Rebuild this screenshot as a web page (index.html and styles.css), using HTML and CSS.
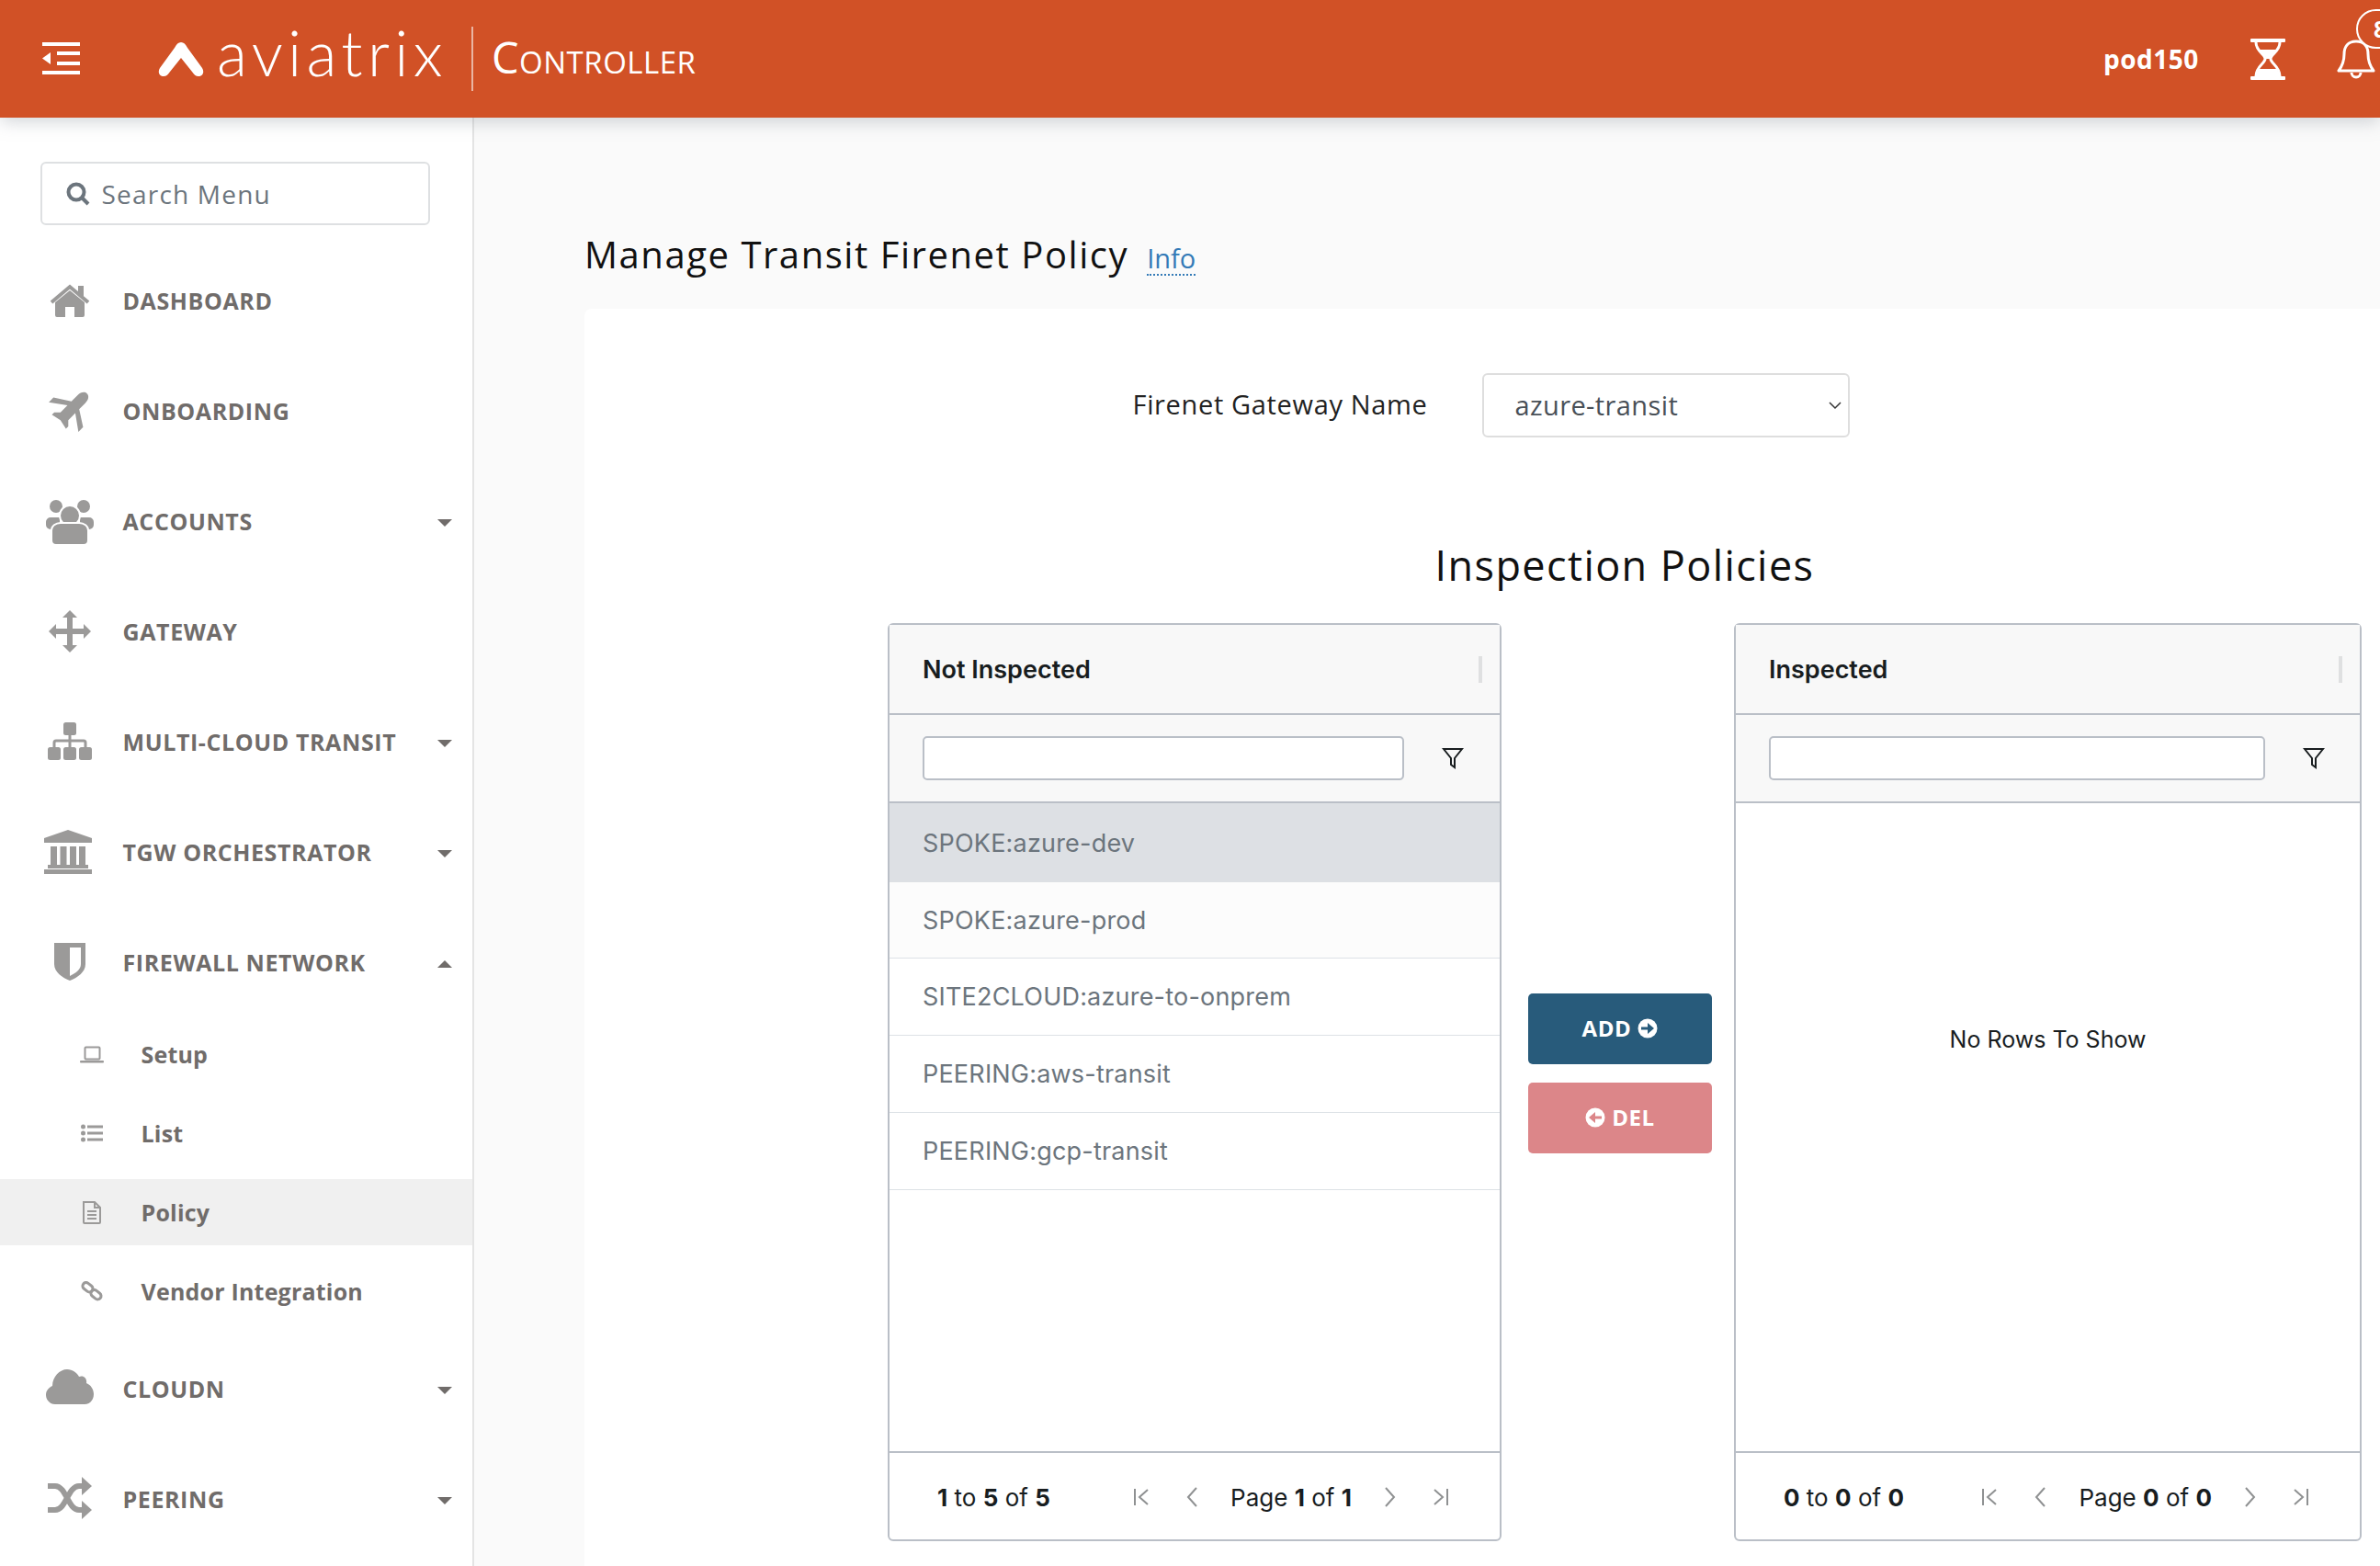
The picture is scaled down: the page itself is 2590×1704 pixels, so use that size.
FILE: index.html
```html
<!DOCTYPE html>
<html>

<head>
    <meta charset="UTF-8">
    <link rel="stylesheet" href="styles.css">
    <title>Aviatrix Controller - Manage Transit Firenet Policy</title>
</head>

<body>
    <svg class="defs" width="0" height="0">
        <symbol id="pg-first" viewBox="0 0 24 24"><path d="M5 3v18M19 4l-9 8 9 8" /></symbol>
        <symbol id="pg-prev" viewBox="0 0 24 24"><path d="M16 2L7 12l9 10" /></symbol>
        <symbol id="pg-next" viewBox="0 0 24 24"><path d="M8 2l9 10-9 10" /></symbol>
        <symbol id="pg-last" viewBox="0 0 24 24"><path d="M19 3v18M5 4l9 8-9 8" /></symbol>
        <symbol id="funnel" viewBox="0 0 24 24"><path d="M2 2h20l-8 10v10l-4-3v-7z" /></symbol>
    </svg>

    <header class="topbar">
        <svg class="menu-toggle" width="41" height="36" viewBox="0 0 41 36">
            <rect width="41" height="4" />
            <rect x="16" y="10" width="25" height="4" />
            <rect x="16" y="21" width="25" height="4" />
            <rect y="31" width="41" height="4" />
            <path d="M9 11L0 17.5 9 24z" />
        </svg>
        <svg class="logo-mark" width="50" height="37" viewBox="0 0 50 37">
            <path d="M25 0C28 0 30 2 32 6L48 28C51 33 48 37 44 37C41 37 39 35 37 32L25 17 13 32C11 35 9 37 6 37C2 37-1 33 2 28L18 6C20 2 22 0 25 0Z" />
        </svg>
        <span class="logo-word">aviatrix</span>
        <span class="logo-sep"></span>
        <span class="logo-product">Controller</span>
        <div class="topbar-right">
            <span class="user">pod150</span>
            <svg class="hourglass" width="38" height="45" viewBox="0 0 38 45">
                <rect width="38" height="4" rx="1" />
                <rect y="41" width="38" height="4" rx="1" />
                <path class="glass" d="M6 4C6 14 16 17 16 22C16 27 6 30 6 41M32 4C32 14 22 17 22 22C22 27 32 30 32 41" />
                <path d="M9.5 12H28.5C26 17 21 18 21 22H17C17 18 12 17 9.5 12ZM9 33H29L32 41H6Z" />
            </svg>
            <div class="bell-wrap">
                <svg class="bell" width="42" height="44" viewBox="0 0 42 44">
                    <path d="M21 3C12 3 8 9 8 17C8 26 5 31 2 35H40C37 31 34 26 34 17C34 9 30 3 21 3Z" />
                    <path d="M16 37a5 5 0 0 0 10 0" />
                </svg>
                <span class="badge">8</span>
            </div>
        </div>
    </header>

    <div class="layout">
        <aside class="sidebar">
            <label class="search">
                <svg width="26" height="26" viewBox="0 0 26 26">
                    <circle cx="11" cy="11" r="8.5" />
                    <path d="M17 17l7 7" />
                </svg>
                <input type="text" placeholder="Search Menu">
            </label>

            <nav class="nav">
                <a class="nav-item">
                    <svg class="nav-icon" viewBox="0 0 56 56">
                        <path d="M12 30L28 17 44 30V44a2 2 0 0 1-2 2H33V35H23V46H14a2 2 0 0 1-2-2Z" />
                        <rect x="37" y="12" width="6" height="11" />
                        <path class="roof" d="M8 30L28 13 48 30" />
                    </svg>
                    DASHBOARD
                </a>
                <a class="nav-item">
                    <svg class="nav-icon" viewBox="0 0 56 56">
                        <path transform="translate(28 28) rotate(45) scale(1.2)" d="M0-22c3 0 5 3 5 7v8l14 9v6L5-2v9l4 4v3l-9-2-9 2v-3l4-4v-9l-14 10v-6l14-9v-8c0-4 2-7 5-7z" />
                    </svg>
                    ONBOARDING
                </a>
                <a class="nav-item has-caret">
                    <svg class="nav-icon" viewBox="0 0 56 56">
                        <circle cx="13" cy="12" r="7" />
                        <circle cx="43" cy="12" r="7" />
                        <path d="M2 29a5 5 0 0 1 5-5h10v13H7a5 5 0 0 1-5-5zM39 24h10a5 5 0 0 1 5 5v3a5 5 0 0 1-5 5H39z" />
                        <circle class="ring" cx="28" cy="22" r="11" />
                        <path class="ring" d="M8 38a10 8 0 0 1 10-8h20a10 8 0 0 1 10 8v11a5 5 0 0 1-5 5H13a5 5 0 0 1-5-5z" />
                    </svg>
                    ACCOUNTS
                </a>
                <a class="nav-item">
                    <svg class="nav-icon" viewBox="0 0 56 56">
                        <path d="M28 5l8 8h-5v12h12v-5l8 8-8 8v-5H31v12h5l-8 8-8-8h5V31H13v5l-8-8 8-8v5h12V13h-5z" />
                    </svg>
                    GATEWAY
                </a>
                <a class="nav-item has-caret">
                    <svg class="nav-icon" viewBox="0 0 56 56">
                        <rect x="21" y="7" width="14" height="14" rx="2.500" />
                        <rect x="4" y="34" width="14" height="14" rx="2.500" />
                        <rect x="21" y="34" width="14" height="14" rx="2.500" />
                        <rect x="38" y="34" width="14" height="14" rx="2.500" />
                        <path class="wire" d="M28 21v13M11 34v-5a2 2 0 0 1 2-2h30a2 2 0 0 1 2 2v5" />
                    </svg>
                    MULTI-CLOUD TRANSIT
                </a>
                <a class="nav-item has-caret">
                    <svg class="nav-icon" viewBox="0 0 56 56">
                        <path d="M26 4l26 9v5H0v-5z" />
                        <rect x="7" y="22" width="7" height="20" />
                        <rect x="17.500" y="22" width="7" height="20" />
                        <rect x="28" y="22" width="7" height="20" />
                        <rect x="38" y="22" width="7" height="20" />
                        <rect x="4" y="42" width="44" height="4" />
                        <rect y="47" width="52" height="5" />
                    </svg>
                    TGW ORCHESTRATOR
                </a>
                <a class="nav-item has-caret open">
                    <svg class="nav-icon" viewBox="0 0 56 56">
                        <path d="M11 7H45V30C45 39 36 45 28 48C20 45 11 39 11 30Z" />
                        <path class="cut" d="M28 12H40V30C40 36 34 40 28 43Z" />
                    </svg>
                    FIREWALL NETWORK
                </a>
                <div class="subnav">
                    <a class="sub-item">
                        <svg class="sub-icon" viewBox="0 0 32 32">
                            <rect class="line" x="8.500" y="8.500" width="16" height="13" rx="1" />
                            <rect x="3" y="23" width="26" height="2.500" rx="1" />
                        </svg>
                        Setup
                    </a>
                    <a class="sub-item">
                        <svg class="sub-icon" viewBox="0 0 32 32">
                            <circle cx="6.500" cy="9" r="2.500" />
                            <circle cx="6.500" cy="16" r="2.500" />
                            <circle cx="6.500" cy="23" r="2.500" />
                            <rect x="11" y="7.500" width="17" height="3" />
                            <rect x="11" y="14.500" width="17" height="3" />
                            <rect x="11" y="21.500" width="17" height="3" />
                        </svg>
                        List
                    </a>
                    <a class="sub-item active">
                        <svg class="sub-icon" viewBox="0 0 32 32">
                            <path class="line" d="M7 5h12l6 6v16a1 1 0 0 1-1 1H8a1 1 0 0 1-1-1zM19 5v6h6M11 15h10M11 19h10M11 23h10" />
                        </svg>
                        Policy
                    </a>
                    <a class="sub-item">
                        <svg class="sub-icon" viewBox="0 0 32 32">
                            <rect class="chain" x="5.500" y="8" width="12" height="7.500" rx="3.700" transform="rotate(38 11.500 11.700)" />
                            <rect class="chain" x="14.500" y="16" width="12" height="7.500" rx="3.700" transform="rotate(38 20.500 19.700)" />
                        </svg>
                        Vendor Integration
                    </a>
                </div>
                <a class="nav-item has-caret">
                    <svg class="nav-icon" viewBox="0 0 56 56">
                        <path d="M12 45C6 45 2 40 2 35C2 30 5 27 9 25C9 15 17 7 25 7C31 7 36 11 38 15C43 13 47 17 46 22C51 24 54 29 54 34C54 40 50 45 44 45Z" />
                    </svg>
                    CLOUDN
                </a>
                <a class="nav-item has-caret">
                    <svg class="nav-icon" viewBox="0 0 56 56">
                        <path class="shuffle" d="M4 14H12C24 14 26 40 38 40H44M4 40H12C24 40 26 14 38 14H44" />
                        <path d="M41 4l11 10-11 10zM41 30l11 10-11 10z" />
                    </svg>
                    PEERING
                </a>
            </nav>
        </aside>

        <main class="main">
            <div class="page-title">
                <h1>Manage Transit Firenet Policy</h1>
                <a class="info">Info</a>
            </div>

            <section class="card">
                <div class="gateway-row">
                    <label for="gatewaySelect">Firenet Gateway Name</label>
                    <div class="select-wrap">
                        <select id="gatewaySelect">
                            <option>azure-transit</option>
                        </select>
                        <svg width="14" height="9" viewBox="0 0 14 9"><path d="M1 1l6 6 6-6" /></svg>
                    </div>
                </div>

                <h2>Inspection Policies</h2>

                <div class="lists">
                    <div class="grid grid-left">
                        <div class="grid-head">Not Inspected<span class="resize"></span></div>
                        <div class="grid-filter">
                            <input type="text">
                            <svg class="funnel"><use href="#funnel" /></svg>
                        </div>
                        <div class="grid-body">
                            <div class="row selected">SPOKE:azure-dev</div>
                            <div class="row tint">SPOKE:azure-prod</div>
                            <div class="row">SITE2CLOUD:azure-to-onprem</div>
                            <div class="row">PEERING:aws-transit</div>
                            <div class="row">PEERING:gcp-transit</div>
                        </div>
                        <div class="grid-foot">
                            <span><b>1</b> to <b>5</b> of <b>5</b></span>
                            <div class="pager">
                                <svg><use href="#pg-first" /></svg>
                                <svg><use href="#pg-prev" /></svg>
                                <span class="page-of">Page <b>1</b> of <b>1</b></span>
                                <svg><use href="#pg-next" /></svg>
                                <svg><use href="#pg-last" /></svg>
                            </div>
                        </div>
                    </div>

                    <div class="move-buttons">
                        <button class="btn btn-add">ADD
                            <svg width="22" height="22" viewBox="0 0 22 22">
                                <circle cx="11" cy="11" r="10.500" />
                                <path d="M4 9.500h7V5l7 6-7 6v-4.500H4z" />
                            </svg>
                        </button>
                        <button class="btn btn-del">
                            <svg width="22" height="22" viewBox="0 0 22 22">
                                <circle cx="11" cy="11" r="10.500" />
                                <path d="M18 9.500h-7V5l-7 6 7 6v-4.500h7z" />
                            </svg>
                            DEL
                        </button>
                    </div>

                    <div class="grid grid-right">
                        <div class="grid-head">Inspected<span class="resize"></span></div>
                        <div class="grid-filter">
                            <input type="text">
                            <svg class="funnel"><use href="#funnel" /></svg>
                        </div>
                        <div class="grid-body empty">No Rows To Show</div>
                        <div class="grid-foot">
                            <span><b>0</b> to <b>0</b> of <b>0</b></span>
                            <div class="pager">
                                <svg><use href="#pg-first" /></svg>
                                <svg><use href="#pg-prev" /></svg>
                                <span class="page-of">Page <b>0</b> of <b>0</b></span>
                                <svg><use href="#pg-next" /></svg>
                                <svg><use href="#pg-last" /></svg>
                            </div>
                        </div>
                    </div>
                </div>
            </section>
        </main>
    </div>
</body>

</html>
```

FILE: styles.css
```css
* {
    box-sizing: border-box;
}

html,
body {
    margin: 0;
    height: 100%;
    overflow: hidden;
}

body {
    display: flex;
    flex-direction: column;
    font-family: "Open Sans", sans-serif;
    background: #fafafa;
}

.defs {
    position: absolute;
}

/* top bar */
.topbar {
    position: relative;
    z-index: 2;
    flex: none;
    display: flex;
    align-items: center;
    height: 128px;
    padding-left: 46px;
    background: #d15126;
    color: #fff;
    box-shadow: 0 4px 18px rgba(120, 130, 140, 0.35);
}

.topbar svg {
    flex: none;
    fill: #fff;
}

.menu-toggle {
    margin-right: 85px;
}

.logo-mark {
    margin-right: 14px;
}

.logo-word {
    width: 246px;
    font-family: "Lato", sans-serif;
    font-size: 68px;
    font-weight: 300;
    line-height: 1;
    letter-spacing: 5.3px;
    position: relative;
    top: -7px;
    white-space: nowrap;
}

.logo-sep {
    width: 2px;
    height: 70px;
    margin: 0 20px 0 31px;
    background: #eab5a2;
}

.logo-product {
    font-size: 47px;
    font-variant: small-caps;
    letter-spacing: 0.5px;
    position: relative;
    top: -2px;
}

.topbar-right {
    display: flex;
    align-items: center;
    margin-left: auto;
    padding-right: 5px;
}

.user {
    width: 160px;
    font-size: 28px;
    font-weight: 700;
    letter-spacing: 0.5px;
}

.hourglass {
    margin-right: 56px;
}

.hourglass .glass,
.bell path {
    fill: none;
    stroke: #fff;
    stroke-width: 3;
}

.bell-wrap {
    position: relative;
    height: 44px;
}

.bell path {
    stroke-linejoin: round;
}

.badge {
    position: absolute;
    left: 21px;
    top: -32px;
    width: 60px;
    height: 43px;
    padding-left: 17px;
    border: 2px solid #fff;
    border-radius: 22px;
    background: #d15126;
    font-size: 25px;
    font-weight: 700;
    line-height: 38px;
}

/* page frame */
.layout {
    flex: 1;
    display: flex;
    min-height: 0;
}

.sidebar {
    flex: none;
    width: 516px;
    border-right: 2px solid #e4e4e4;
    background: #fff;
    overflow: hidden;
}

.search {
    display: flex;
    align-items: center;
    gap: 12.5px;
    width: 424px;
    height: 69px;
    margin: 48px 0 22px 44px;
    padding-left: 26px;
    border: 2px solid #dee0e2;
    border-radius: 6px;
}

.search svg {
    flex: none;
    fill: none;
    stroke: #6c757d;
    stroke-width: 4;
}

.search input {
    width: 300px;
    border: 0;
    outline: 0;
    padding: 0;
    font-family: inherit;
    font-size: 28px;
}

.search input::placeholder {
    color: #6c757d;
    letter-spacing: 1.2px;
    opacity: 1;
}

.nav-item {
    display: flex;
    align-items: center;
    height: 120px;
    padding: 0 22px 0 48px;
    color: #706c6a;
    font-size: 25px;
    font-weight: 700;
    letter-spacing: 0.6px;
}

.nav-icon {
    flex: none;
    width: 56px;
    height: 56px;
    margin-right: 29.5px;
    fill: #9b9a99;
}

.nav-icon .roof {
    fill: none;
    stroke: #9b9a99;
    stroke-width: 4;
}

.nav-icon .ring {
    stroke: #fff;
    stroke-width: 2;
}

.nav-icon .wire {
    fill: none;
    stroke: #9b9a99;
    stroke-width: 3;
}

.nav-icon .cut {
    fill: #fff;
}

.nav-icon .shuffle {
    fill: none;
    stroke: #9b9a99;
    stroke-width: 6;
}

.has-caret::after {
    content: "";
    margin-left: auto;
    margin-top: 3px;
    border-left: 8px solid transparent;
    border-right: 8px solid transparent;
    border-top: 8px solid #706c6a;
}

.has-caret.open::after {
    border-top: 0;
    border-bottom: 8px solid #706c6a;
}

.subnav {
    margin: 4px 0 10px;
}

.sub-item {
    display: flex;
    align-items: center;
    height: 72px;
    margin-bottom: 14px;
    padding-left: 84px;
    color: #706c6a;
    font-size: 25px;
    font-weight: 700;
    letter-spacing: 0.2px;
}

.sub-item:last-child {
    margin-bottom: 0;
}

.sub-item.active {
    background: #f0f0f0;
}

.sub-icon {
    flex: none;
    width: 32px;
    height: 32px;
    margin-right: 37.5px;
    fill: #9b9a99;
}

.sub-icon .line,
.sub-icon .chain {
    fill: none;
    stroke: #9b9a99;
    stroke-width: 2;
}

.sub-icon .chain {
    stroke-width: 3;
}

/* main area */
.main {
    flex: 1;
    min-width: 0;
    padding-left: 120px;
    overflow: hidden;
}

.page-title {
    display: flex;
    align-items: baseline;
    height: 208px;
    padding-top: 119px;
}

.page-title h1 {
    margin: 0;
    color: #111;
    font-size: 40px;
    font-weight: 400;
    letter-spacing: 1.55px;
    line-height: 60px;
}

.info {
    margin-left: 20px;
    border-bottom: 2px dotted #337ab7;
    color: #337ab7;
    font-size: 29px;
    line-height: 34px;
}

.card {
    width: 1974px;
    height: 1400px;
    border-radius: 8px 8px 0 0;
    background: #fff;
}

.gateway-row {
    display: flex;
    justify-content: center;
    align-items: center;
    gap: 60px;
    padding-top: 70px;
    color: #222;
    font-size: 29px;
}

.gateway-row label {
    letter-spacing: 0.65px;
    padding-bottom: 3px;
}

.select-wrap {
    position: relative;
    width: 400px;
    height: 70px;
}

.select-wrap select {
    appearance: none;
    width: 100%;
    height: 100%;
    padding: 0 0 2px 33px;
    border: 2px solid #dedede;
    border-radius: 6px;
    background: #fff;
    color: #495057;
    font-family: inherit;
    font-size: 29px;
    letter-spacing: 0.4px;
}

.select-wrap svg {
    position: absolute;
    right: 9px;
    top: 31px;
    fill: none;
    stroke: #333;
    stroke-width: 1.5;
}

.card h2 {
    margin: 104px 0 0 330px;
    width: 1604px;
    color: #111;
    font-size: 45px;
    font-weight: 400;
    letter-spacing: 1.4px;
    line-height: 70px;
    text-align: center;
}

.lists {
    display: flex;
    width: 1604px;
    height: 999px;
    margin: 28px 0 0 330px;
    font-family: "Inter", sans-serif;
}

.grid {
    display: flex;
    flex-direction: column;
    border: 2px solid #babfc7;
    border-radius: 6px;
    color: #181d1f;
}

.grid-left {
    width: 668px;
}

.grid-right {
    width: 683px;
}

.grid-head {
    flex: none;
    display: flex;
    align-items: center;
    justify-content: space-between;
    height: 98px;
    padding: 0 19px 0 36px;
    border-bottom: 2px solid #babfc7;
    background: #f8f8f8;
    font-size: 27px;
    font-weight: 600;
}

.resize {
    width: 4px;
    height: 29px;
    background: #dfe0e1;
}

.grid-filter {
    flex: none;
    display: flex;
    align-items: center;
    height: 96px;
    padding-left: 36px;
    border-bottom: 2px solid #babfc7;
    background: #f8f8f8;
}

.grid-filter input {
    flex: none;
    height: 48px;
    border: 2px solid #babfc7;
    border-radius: 5px;
    background: #fff;
}

.grid-left input {
    width: 524px;
    margin-right: 41px;
}

.grid-right input {
    width: 540px;
    margin-right: 41px;
}

.funnel {
    width: 24px;
    height: 24px;
    fill: none;
    stroke: #181d1f;
    stroke-width: 2;
}

.grid-body {
    flex: 1;
}

.row {
    display: flex;
    align-items: center;
    height: 84px;
    padding-left: 36px;
    border-bottom: 1px solid #dde2e6;
    color: #6c757d;
    font-size: 27px;
    letter-spacing: 0.2px;
}

.row.selected {
    height: 86px;
    border-bottom: 0;
    background: #dde0e4;
}

.row.tint {
    height: 83px;
    background: #fcfcfc;
}

.empty {
    display: flex;
    align-items: center;
    justify-content: center;
    padding-bottom: 192px;
    font-size: 25px;
}

.grid-foot {
    flex: none;
    display: flex;
    align-items: center;
    justify-content: space-between;
    height: 96px;
    padding: 2px 52px 0 52px;
    border-top: 2px solid #babfc7;
    font-size: 26px;
}

.grid-foot b {
    font-weight: 700;
}

.pager {
    display: flex;
    align-items: center;
    gap: 32px;
}

.page-of {
    margin: 0 -3px;
}

.pager svg {
    width: 24px;
    height: 24px;
    fill: none;
    stroke: #8f9192;
    stroke-width: 2;
}

.move-buttons {
    flex: none;
    display: flex;
    flex-direction: column;
    justify-content: center;
    gap: 20px;
    width: 253px;
    padding: 0 24px 19px 29px;
}

.btn {
    display: flex;
    align-items: center;
    justify-content: center;
    gap: 7px;
    height: 77px;
    padding: 0 0 2px;
    border: 0;
    border-radius: 5px;
    color: #fff;
    font-family: "Open Sans", sans-serif;
    font-size: 24px;
    font-weight: 700;
    letter-spacing: 0.6px;
}

.btn svg {
    fill: #fff;
}

.btn-add {
    background: #285b7b;
}

.btn-add svg path {
    fill: #285b7b;
}

.btn-del {
    background: #dc8689;
}

.btn-del svg path {
    fill: #dc8689;
}
```
